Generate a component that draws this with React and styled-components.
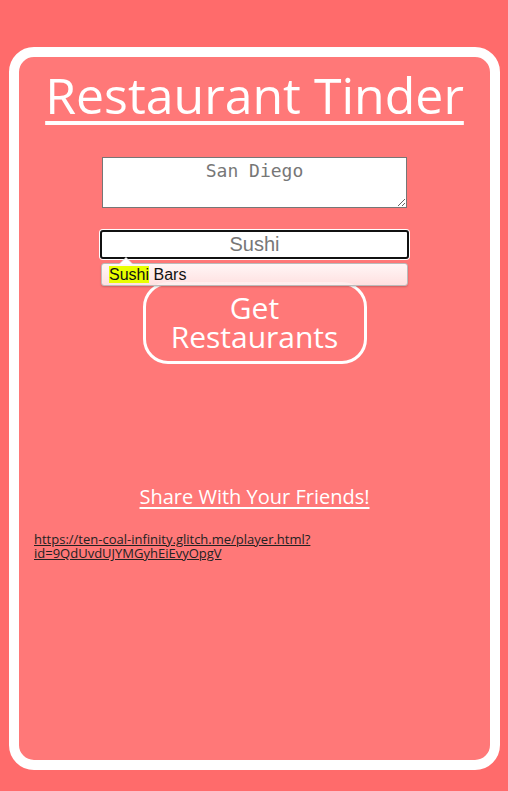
import React from 'react';
import styled, { createGlobalStyle } from 'styled-components';

const GlobalStyle = createGlobalStyle`
  html, body {
    margin: 0;
    padding: 0;
    background: #ff6b6b;
  }
  body {
    font-family: 'Open Sans', sans-serif;
  }
`;

const Card = styled.div`
  box-sizing: border-box;
  margin: 47px 8px 21px 9px;
  height: 723px;
  border: 10px solid #fff;
  border-radius: 25px;
  background: #ff7878;
  display: flex;
  flex-direction: column;
  align-items: center;
`;

const Title = styled.h1`
  margin: 2px 0 0;
  font-family: 'Open Sans', sans-serif;
  font-weight: 400;
  font-size: 50px;
  line-height: 72px;
  color: #fff;
  text-decoration: underline;
  text-decoration-thickness: 4px;
  text-underline-offset: 7px;
`;

const Location = styled.textarea`
  box-sizing: border-box;
  margin-top: 26px;
  width: 305px;
  height: 51px;
  border: 1px solid #767676;
  padding: 2px;
  font-family: 'DejaVu Sans Mono', monospace;
  font-size: 18px;
  color: #777;
  text-align: center;
  background: #fff;
  resize: both;
`;

const SearchWrap = styled.div`
  position: relative;
  margin-top: 22px;
  width: 309px;
`;

const Search = styled.input`
  box-sizing: border-box;
  display: block;
  width: 309px;
  height: 29px;
  border: 2px solid #111;
  border-radius: 3px;
  box-shadow: 0 0 0 1px #fff;
  outline: none;
  font-family: 'Liberation Sans', Arial, sans-serif;
  font-size: 20px;
  color: #777;
  text-align: center;
  background: #fff;
`;

const Suggestions = styled.div`
  position: absolute;
  top: 33px;
  left: 1px;
  right: 1px;
  height: 23px;
  box-sizing: border-box;
  border: 1px solid #bbb;
  border-radius: 3px;
  background: linear-gradient(#fff6f6, rgba(255, 236, 236, 0.9));
  box-shadow: 0 1px 2px rgba(0, 0, 0, 0.2);
  z-index: 2;
  font-family: 'Liberation Sans', Arial, sans-serif;
  font-size: 16px;
  line-height: 21px;
  color: #111;
  padding-left: 7px;

  &::before {
    content: '';
    position: absolute;
    top: -7px;
    left: 17px;
    border-left: 7px solid transparent;
    border-right: 7px solid transparent;
    border-bottom: 7px solid #ddd;
  }
  &::after {
    content: '';
    position: absolute;
    top: -6px;
    left: 18px;
    border-left: 6px solid transparent;
    border-right: 6px solid transparent;
    border-bottom: 6px solid #fff;
  }
`;

const Match = styled.mark`
  background: #e8ff00;
  color: #111;
`;

const GetButton = styled.button`
  box-sizing: border-box;
  margin-top: 23px;
  width: 224px;
  height: 82px;
  border: 3px solid #fff;
  border-radius: 25px;
  background: transparent;
  color: #fff;
  font-family: 'Open Sans', sans-serif;
  font-size: 30px;
  line-height: 29px;
  padding: 0 10px 2px;
`;

const Share = styled.a`
  margin-top: 119px;
  font-family: 'Open Sans', sans-serif;
  font-size: 20px;
  line-height: 27px;
  color: #fff;
  text-decoration: underline;
  text-decoration-thickness: 2px;
  text-underline-offset: 3px;
`;

const LinkRow = styled.div`
  align-self: stretch;
  margin-top: 22px;
  padding-left: 15px;
  width: 300px;
  font-size: 13px;
  line-height: 14px;
`;

const ShareLink = styled.a`
  font-family: 'Open Sans', sans-serif;
  font-size: 13px;
  line-height: 14px;
  color: #222;
  text-decoration: underline;
  word-break: break-all;
`;

export default function App() {
  return (
    <>
      <GlobalStyle />
      <Card>
        <Title>Restaurant Tinder</Title>
        <Location defaultValue="San Diego" />
        <SearchWrap>
          <Search defaultValue="Sushi" />
          <Suggestions>
            <Match>Sushi</Match> Bars
          </Suggestions>
        </SearchWrap>
        <GetButton>Get Restaurants</GetButton>
        <Share href="#">Share With Your Friends!</Share>
        <LinkRow>
          <ShareLink href="#">
            https://ten-coal-infinity.glitch.me/player.html?
            <br />
            id=9QdUvdUJYMGyhEiEvyOpgV
          </ShareLink>
        </LinkRow>
      </Card>
    </>
  );
}
